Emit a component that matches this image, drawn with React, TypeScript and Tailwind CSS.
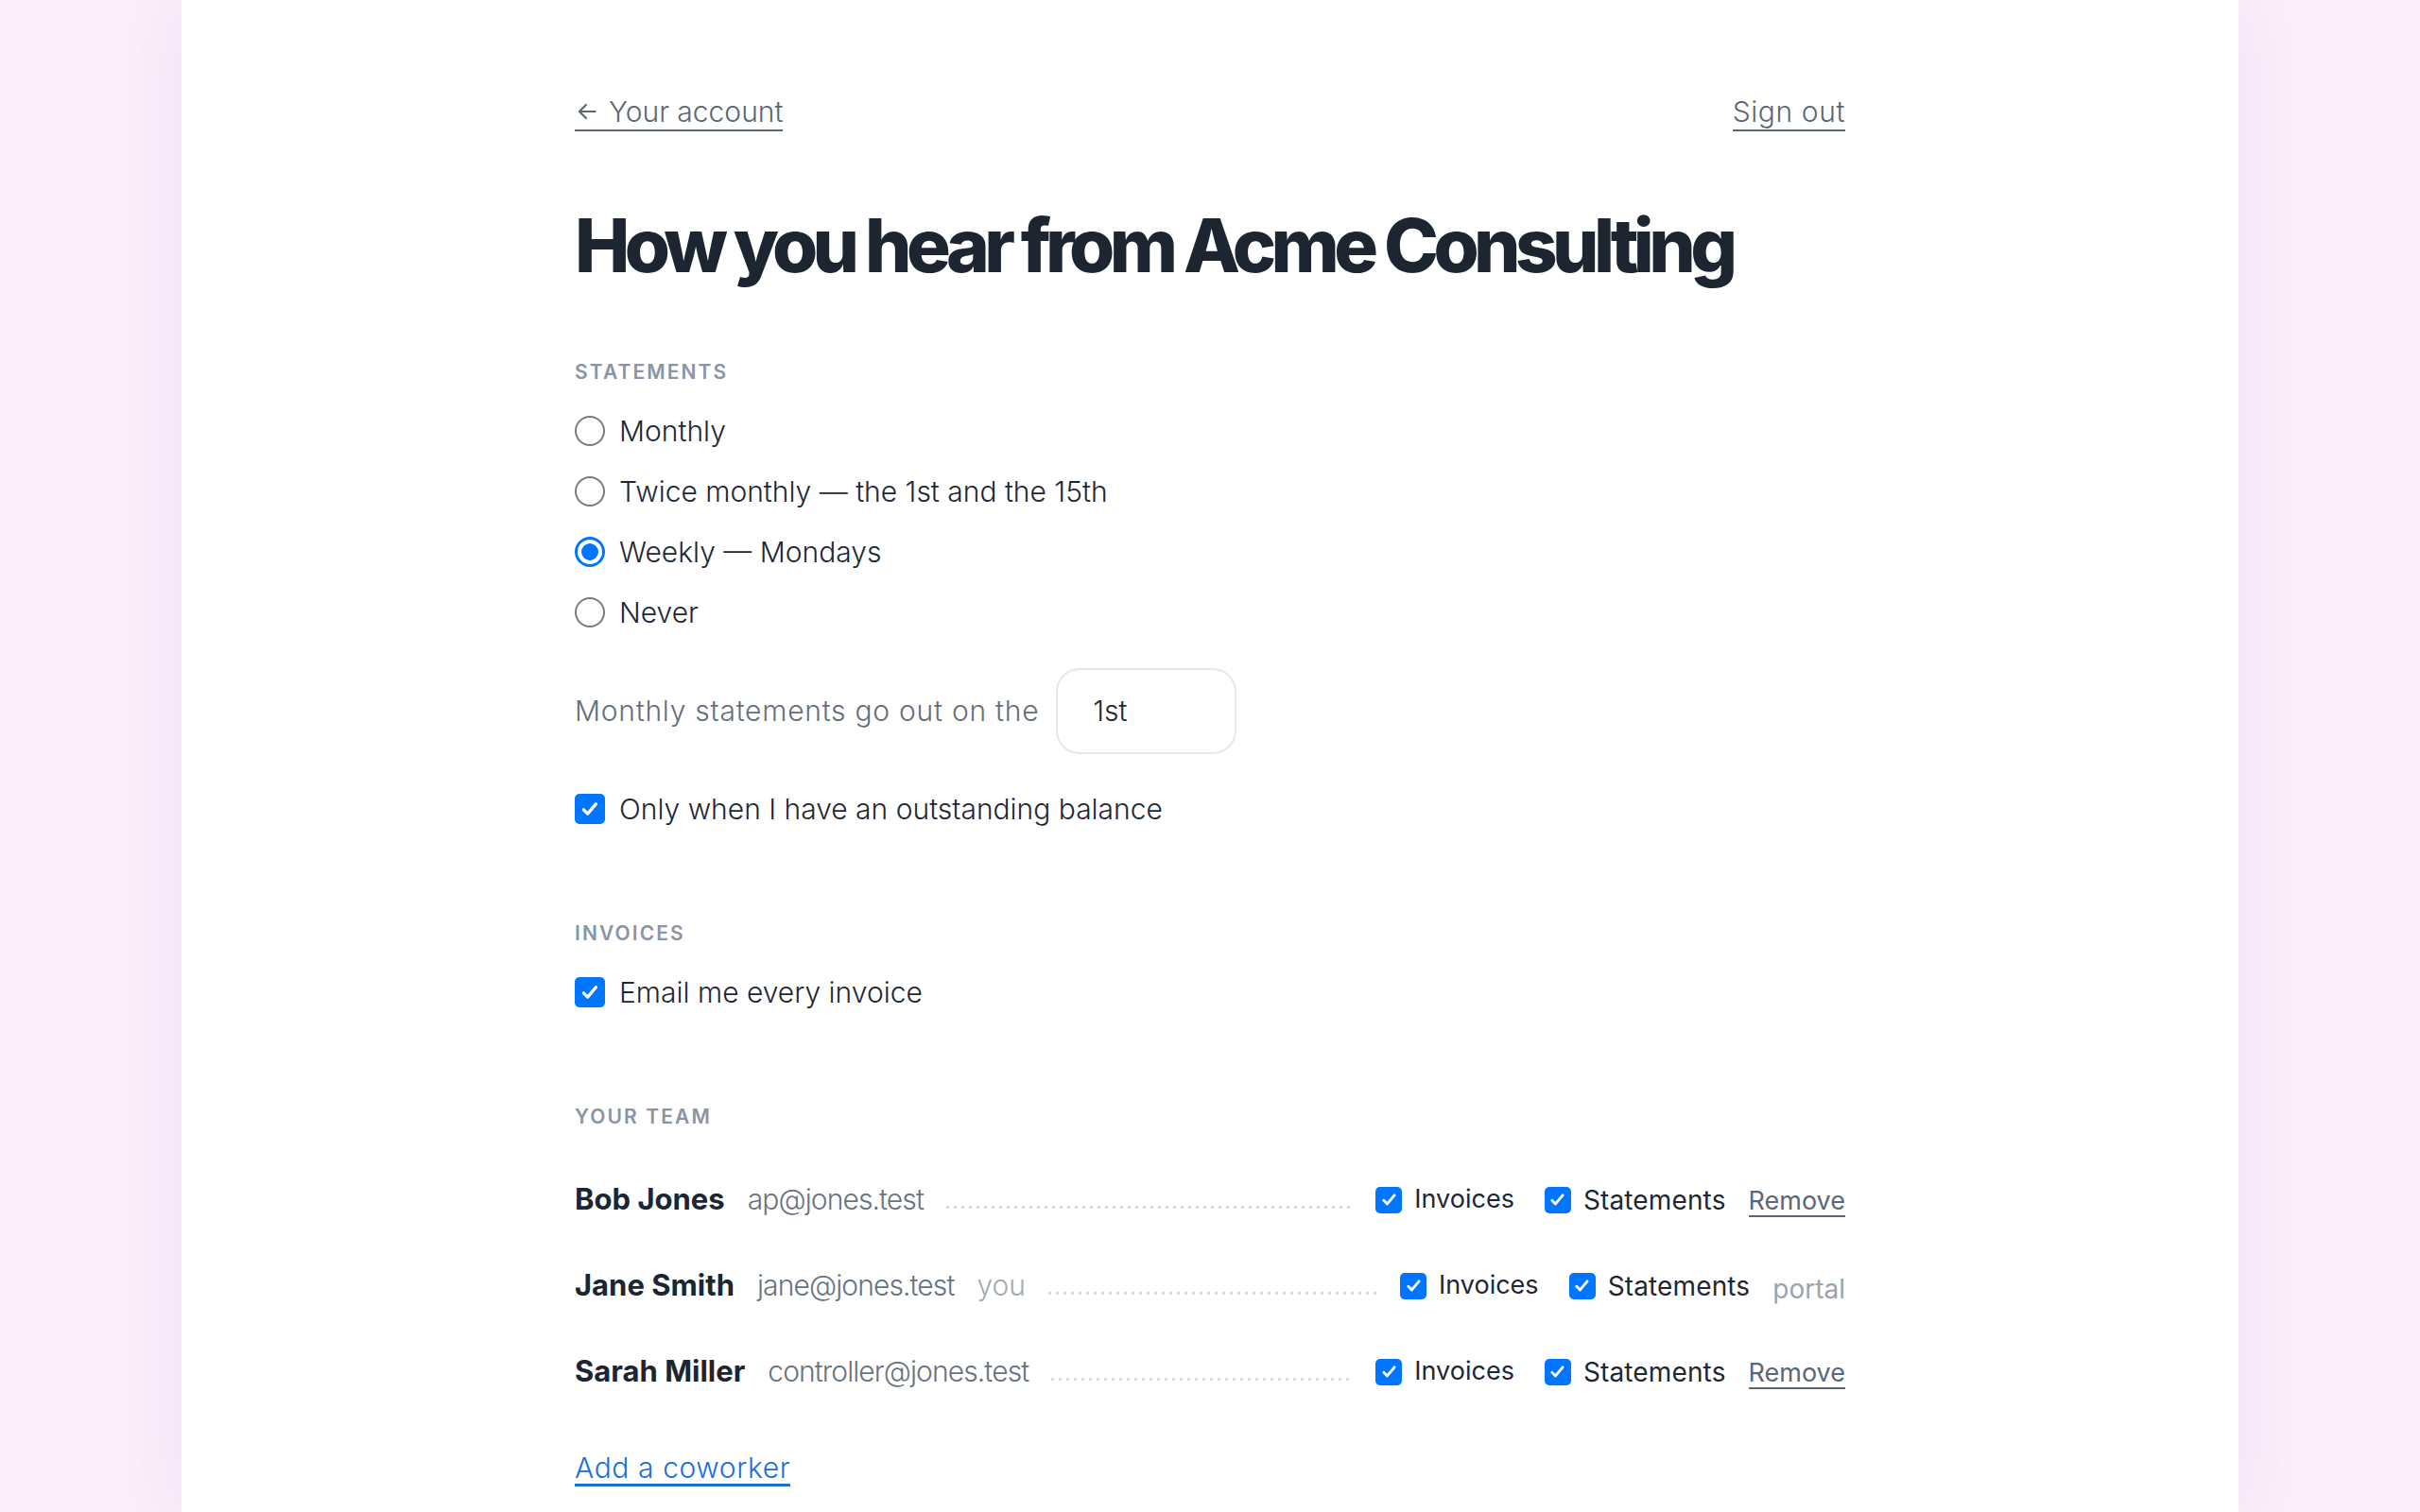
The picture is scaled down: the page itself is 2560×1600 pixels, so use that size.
import React from 'react';

const statementOptions = [
  { id: 'monthly', label: 'Monthly' },
  { id: 'twice', label: 'Twice monthly — the 1st and the 15th' },
  { id: 'weekly', label: 'Weekly — Mondays' },
  { id: 'never', label: 'Never' },
];

const team = [
  { name: 'Bob Jones', email: 'ap@jones.test', you: false },
  { name: 'Jane Smith', email: 'jane@jones.test', you: true },
  { name: 'Sarah Miller', email: 'controller@jones.test', you: false },
];

function Check({ size = 32 }: { size?: number }) {
  return (
    <span
      className={`shrink-0 flex items-center justify-center rounded-[5px] bg-[#0075ff] ${size === 32 ? 'w-8 h-8' : 'w-7 h-7'}`}
    >
      <svg viewBox="0 0 16 16" className={size === 32 ? 'w-[22px] h-[22px]' : 'w-[19px] h-[19px]'} fill="none">
        <path d="M3.2 8.6l3.1 3.1 6.4-7.6" stroke="#fff" strokeWidth="2.4" strokeLinecap="round" strokeLinejoin="round" />
      </svg>
    </span>
  );
}

function Radio({ checked }: { checked: boolean }) {
  if (checked) {
    return (
      <span className="shrink-0 w-8 h-8 rounded-full border-[3px] border-[#0075ff] flex items-center justify-center">
        <span className="w-[18px] h-[18px] rounded-full bg-[#0075ff]" />
      </span>
    );
  }
  return <span className="shrink-0 w-8 h-8 rounded-full border-2 border-[#7a7a7a]" />;
}

function SectionLabel({ children, className = '' }: { children: React.ReactNode; className?: string }) {
  return (
    <div className={`h-[28px] leading-[28px] text-[21px] font-semibold tracking-[0.1em] text-[#8a94a2] ${className}`}>
      {children}
    </div>
  );
}

export default function App() {
  return (
    <div className="min-h-screen bg-[#fbf0fb] font-['Inter',sans-serif]">
      <div className="mx-auto w-[2176px] min-h-[1600px] bg-white shadow-[0_0_80px_rgba(190,120,190,0.16)]">
        <div className="mx-auto w-[1344px] pt-[99px] pb-[30px]">
          {/* Top links */}
          <div className="flex items-center justify-between h-[40px]">
            <a className="flex items-center gap-[10px] h-[40px] border-b-2 border-[#5c6776] text-[30px] font-light leading-[38px] text-[#5c6776]">
              <svg viewBox="0 0 24 24" className="w-[26px] h-[26px]" fill="none">
                <path d="M20 12H4.5M11 5.5L4.5 12l6.5 6.5" stroke="#5c6776" strokeWidth="2" strokeLinecap="round" strokeLinejoin="round" />
              </svg>
              Your account
            </a>
            <a className="h-[40px] border-b-2 border-[#5c6776] text-[30px] font-light leading-[38px] tracking-[0.02em] text-[#5c6776]">
              Sign out
            </a>
          </div>

          <h1 className="mt-[82px] text-[78px] leading-[78px] font-extrabold tracking-[-0.072em] text-[#1d2530]">
            How you hear from Acme Consulting
          </h1>

          {/* Statements */}
          <SectionLabel className="mt-[81px]">STATEMENTS</SectionLabel>
          <div className="mt-[16px]">
            {statementOptions.map((o) => (
              <label key={o.id} className="flex items-center gap-[15px] h-[64px] text-[30px] font-light text-[#1f2733]">
                <Radio checked={o.id === 'weekly'} />
                <span>{o.label}</span>
              </label>
            ))}
          </div>

          <div className="mt-[27px] flex items-center gap-[18px]">
            <span className="text-[30px] font-light tracking-[0.025em] text-[#656e7b]">Monthly statements go out on the</span>
            <div className="w-[191px] h-[91px] rounded-[25px] border-2 border-[#e3e8ef] flex items-center pl-[37px] text-[30px] font-light text-[#1f2733]">
              1st
            </div>
          </div>

          <label className="mt-[26px] flex items-center gap-[15px] h-[64px] text-[30px] font-light text-[#1f2733]">
            <Check />
            <span>Only when I have an outstanding balance</span>
          </label>

          {/* Invoices */}
          <SectionLabel className="mt-[86px]">INVOICES</SectionLabel>
          <label className="mt-[16px] flex items-center gap-[15px] h-[64px] text-[30px] font-light text-[#1f2733]">
            <Check />
            <span>Email me every invoice</span>
          </label>

          {/* Team */}
          <SectionLabel className="mt-[86px]">YOUR TEAM</SectionLabel>
          <div className="mt-[28px]">
            {team.map((m) => (
              <div key={m.email} className="flex items-center gap-[24px] h-[91px]">
                <span className="text-[31px] font-bold text-[#1d2530]">{m.name}</span>
                <span className="text-[30px] font-light tracking-[-0.03em] text-[#69727f]">{m.email}</span>
                {m.you && <span className="text-[30px] font-light text-[#a3aab4]">you</span>}
                <div className="flex-1 h-[3px] mt-[16px] bg-[linear-gradient(to_right,#d6dae0_3px,transparent_3px)] bg-[length:8px_3px] bg-repeat-x" />
                <div className="flex items-center">
                  <label className="flex items-center gap-[13px] text-[27px] text-[#1f2733]">
                    <Check size={28} />
                    <span>Invoices</span>
                  </label>
                  <label className="ml-[32px] flex items-center gap-[13px] text-[28px] tracking-[0.005em] text-[#1f2733]">
                    <Check size={28} />
                    <span>Statements</span>
                  </label>
                  {m.you ? (
                    <span className="ml-[24px] mt-[6px] text-[28px] leading-[32px] text-[#9aa3ae]">portal</span>
                  ) : (
                    <a className="ml-[24px] mt-[5px] text-[27px] leading-[30px] border-b-2 border-[#5c6776] text-[#5c6776]">
                      Remove
                    </a>
                  )}
                </div>
              </div>
            ))}
          </div>

          <a className="mt-[39px] inline-block text-[30px] font-light leading-[34px] tracking-[0.02em] border-b-[3px] border-[#1a6fd8] text-[#1a6fd8]">
            Add a coworker
          </a>
        </div>
      </div>
    </div>
  );
}
